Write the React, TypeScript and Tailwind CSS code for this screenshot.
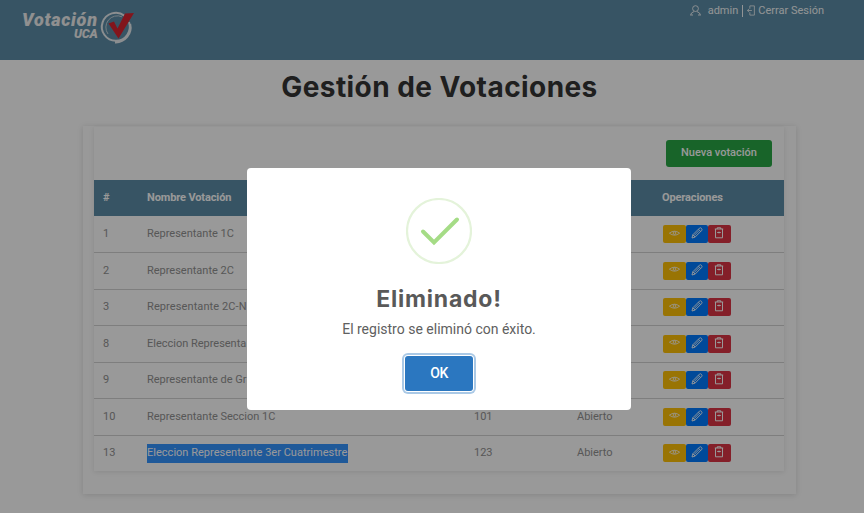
import React from "react";

const rows = [
  { id: "1", name: "Representante 1C", code: "101" },
  { id: "2", name: "Representante 2C", code: "102" },
  { id: "3", name: "Representante 2C-N", code: "103" },
  { id: "8", name: "Eleccion Representa", code: "108" },
  { id: "9", name: "Representante de Gr", code: "109" },
  { id: "10", name: "Representante Seccion 1C", code: "101" },
  { id: "13", name: "Eleccion Representante 3er Cuatrimestre", code: "123", selected: true },
];

function Logo() {
  return (
    <div className="relative h-9 w-[112px]">
      <span className="absolute left-0 top-[3px] whitespace-nowrap font-['Roboto',sans-serif] text-[18px] font-black italic leading-[16px] text-[#f0f0f0] tracking-[0.75px]">
        Votación
      </span>
      <span className="absolute left-[52px] top-[19px] whitespace-nowrap font-['Roboto',sans-serif] text-[12.5px] font-black italic leading-[12px] text-[#f0f0f0] tracking-[-0.2px]">
        UCA
      </span>
      <svg className="absolute left-[77px] top-0" width="36" height="36" viewBox="0 0 36 36" fill="none">
        <path d="M25.5 6.8A14 14 0 1 0 30 13" stroke="#e8edf0" strokeWidth="2" />
        <path d="M16 33.2A14.8 14.8 0 0 0 31 15" stroke="#e8edf0" strokeWidth="2.4" />
        <path d="M23 7.8A11.5 11.5 0 0 0 9 25" stroke="#c3d2da" strokeWidth="1" />
        <path d="M9.5 14.5 15 12.5 18.5 19.5 26 4.5 35 4 19.5 29.5Z" fill="#d92430" />
      </svg>
    </div>
  );
}

function Eye() {
  return (
    <svg width="11" height="11" viewBox="0 0 11 11" fill="none" stroke="#fff" strokeWidth=".8">
      <path d="M.4 5.2Q5.5 1.2 10.6 5.2Q5.5 9.2.4 5.2Z" />
      <circle cx="5.5" cy="5.1" r="1.3" />
    </svg>
  );
}

function Pencil() {
  return (
    <svg width="12" height="12" viewBox="0 0 12 12" fill="none" stroke="#fff" strokeWidth=".9" strokeLinejoin="round">
      <path d="M1 11 1.8 7.8 8.5 1.1Q9.4.3 10.4 1.3T10.8 3.3L4.1 10.1ZM1.8 7.8 4.1 10.1M7.4 2.2 9.7 4.5M3 8.7 8.3 3.4" />
    </svg>
  );
}

function Clipboard() {
  return (
    <svg width="10" height="12" viewBox="0 0 10 12" fill="none" stroke="#fff" strokeWidth="1">
      <path d="M1.5 2V10.8H8.5V2M.8 2H9.2M3.2 2V.8H6.8V2M3.2 5.5H6.8" />
      <path d="M4.2 5.5H5.8" strokeWidth="1.5" />
    </svg>
  );
}

function Actions() {
  return (
    <div className="flex">
      <button className="flex h-[18px] w-[22.5px] items-center justify-center rounded-[2px] bg-[#ffc107] pb-[2px]"><Eye /></button>
      <button className="flex h-[18px] w-[22.5px] items-center justify-center rounded-[2px] bg-[#007bff] pb-[2px]"><Pencil /></button>
      <button className="flex h-[18px] w-[22.5px] items-center justify-center rounded-[2px] bg-[#dc3545] pb-[2px]"><Clipboard /></button>
    </div>
  );
}

const columns = "grid grid-cols-[44px_327px_103px_86px_1fr] items-center pl-[9px]";

export default function App() {
  return (
    <div className="relative h-[513px] w-[864px] overflow-hidden bg-white font-['Roboto',sans-serif]">
      <header className="flex h-[60px] items-start justify-between bg-[#5d8da7] pl-[22px] pr-[40px] pt-[9px]">
        <Logo />
        <div className="-mt-[6px] flex h-4 items-center text-[11px] leading-4 text-[#f4f7f9]">
          <svg className="mr-[7px] -mt-[2px]" width="11" height="11" viewBox="0 0 11 11" fill="none" stroke="currentColor" strokeWidth=".9">
            <circle cx="5.5" cy="3.6" r="2.9" />
            <path d="M.5 10.3Q.8 7.5 4 6.6M7 6.6Q10.2 7.5 10.5 10.3M.5 10H3M8 10H10.5" />
          </svg>
          <span>admin</span>
          <span className="ml-[4px] mr-[4px] h-[12px] w-px bg-current" />
          <svg className="mr-[3px] -mt-[1px]" width="8" height="11" viewBox="0 0 9 12" fill="none" stroke="currentColor" strokeWidth=".9">
            <path d="M3.2 4V.8H8.3V11.2H3.2V8M.5 6H5.5M2.2 4.2.5 6 2.2 7.8" />
          </svg>
          <span>Cerrar Sesión</span>
        </div>
      </header>

      <main className="ml-[83px] w-[713px]">
        <h1 className="flex h-[66px] items-center justify-center whitespace-nowrap pb-[12px] font-['Inter',sans-serif] text-[28px] font-bold leading-8 tracking-[0.43px] text-[#343434]">
          Gestión de Votaciones
        </h1>
        <section className="h-[368px] pl-[11px] pr-[12px] pt-px shadow-[0_1px_6px_rgba(0,0,0,0.14)]">
          <div className="h-[344px] shadow-[0_1px_5px_rgba(0,0,0,0.1)]">
            <div className="flex h-[53px] items-center justify-end pr-[12px]">
              <button className="h-[27px] w-[106px] rounded-[3px] bg-[#28a745] text-[11px] font-medium text-white">Nueva votación</button>
            </div>
            <div className={`${columns} h-[36px] bg-[#5d8da7] text-[11px] font-bold tracking-[-0.12px] text-white`}>
              <span>#</span>
              <span>Nombre Votación</span>
              <span />
              <span />
              <span className="-ml-px">Operaciones</span>
            </div>
            {rows.map((row, i) => (
              <div
                key={row.id}
                className={`${columns} text-[11px] text-[#929292] ${i > 0 ? "h-[36.5px] border-t border-[#d2d2d2]" : "h-[36px]"}`}
              >
                <span>{row.id}</span>
                <span className={`whitespace-nowrap ${i === 2 ? "tracking-[0.1px]" : "tracking-[-0.01px]"}`}>
                  {row.selected ? (
                    <span className="block h-[19px] w-[201px] bg-[#3594ff] leading-[18px] tracking-[0.02px] text-white">{row.name}</span>
                  ) : (
                    row.name
                  )}
                </span>
                <span>{i < 5 ? "" : row.code}</span>
                <span>{i < 5 ? "" : "Abierto"}</span>
                <Actions />
              </div>
            ))}
          </div>
        </section>
      </main>

      <div className="absolute inset-0 bg-black/40" />

      <div role="dialog" className="absolute left-[247px] top-[168px] flex h-[242px] w-[384px] flex-col items-center rounded-[4px] bg-white pt-[30px]">
        <svg width="66" height="66" viewBox="0 0 66 66" fill="none">
          <circle cx="33" cy="33" r="32" stroke="#e4f3da" strokeWidth="2.2" />
          <path d="M17 33.5 28 44.5 51 21.5" stroke="#a5dc86" strokeWidth="4" strokeLinecap="round" />
        </svg>
        <h2 className="mt-[21px] whitespace-nowrap font-['Inter',sans-serif] text-[23px] font-bold leading-7 tracking-[0.8px] text-[#595959]">Eliminado!</h2>
        <p className="mt-[6px] whitespace-nowrap text-[14px] leading-5 text-[#606060]">El registro se eliminó con éxito.</p>
        <button className="mt-[17px] h-[35px] w-[68px] rounded-[3px] bg-[#2b77c0] text-[14px] font-medium tracking-[-0.5px] text-white shadow-[0_0_0_1px_#fff,0_0_0_3px_#aac9e6]">OK</button>
      </div>
    </div>
  );
}
